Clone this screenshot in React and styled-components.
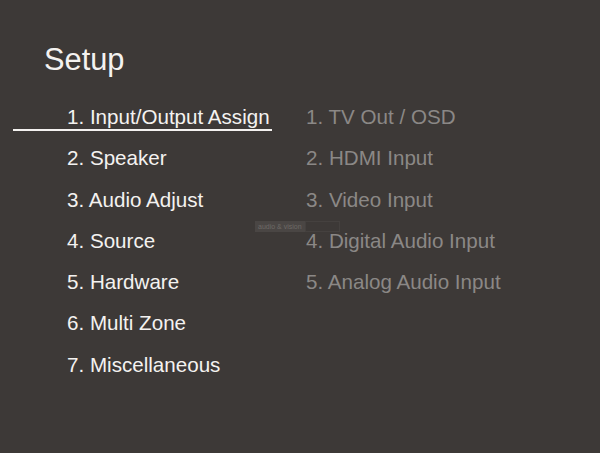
import React from "react";
import styled, { createGlobalStyle } from "styled-components";

const Global = createGlobalStyle`
  html, body {
    margin: 0;
    padding: 0;
    background: #3d3937;
  }
`;

const Screen = styled.div`
  width: 600px;
  height: 453px;
  background: #3d3937;
  font-family: "Liberation Sans", Arial, sans-serif;
  position: relative;
  overflow: hidden;
`;

const Title = styled.h1`
  margin: 0;
  padding: 42px 0 0 44px;
  font-size: 30.8px;
  font-weight: normal;
  line-height: 36px;
  color: #f4f2f0;
`;

const Columns = styled.div`
  display: flex;
  padding-top: 27px;
`;

const List = styled.ul`
  list-style: none;
  margin: 0;
  padding: 0;
  display: flex;
  flex-direction: column;
  gap: 17.3px;
  width: ${(p) => p.$width}px;
  padding-left: ${(p) => p.$left}px;
`;

const Item = styled.li`
  width: fit-content;
  height: 24px;
  line-height: 24px;
  font-size: 20.6px;
  white-space: nowrap;
  color: ${(p) => (p.$dim ? "#8b8886" : "#f4f2f0")};
  padding-left: ${(p) => p.$indent || 0}px;
  padding-right: ${(p) => (p.$selected ? 2 : 0)}px;
  box-shadow: ${(p) => (p.$selected ? "0 2px 0 #f4f2f0" : "none")};
`;

const Watermark = styled.div`
  position: absolute;
  left: 255px;
  top: 221px;
  display: flex;
  height: 11px;
  font-size: 7px;
  line-height: 11px;
  color: #6e6a67;
`;

const MarkText = styled.span`
  background: #4a4644;
  padding: 0 3px;
`;

const MarkBox = styled.span`
  width: 33px;
  border: 1px solid #45413f;
`;

const main = [
  "1. Input/Output Assign",
  "2. Speaker",
  "3. Audio Adjust",
  "4. Source",
  "5. Hardware",
  "6. Multi Zone",
  "7. Miscellaneous",
];

const sub = [
  "1. TV Out / OSD",
  "2. HDMI Input",
  "3. Video Input",
  "4. Digital Audio Input",
  "5. Analog Audio Input",
];

export default function App() {
  return (
    <Screen>
      <Global />
      <Title>Setup</Title>
      <Columns>
        <List $left={13} $width={293}>
          {main.map((t, i) => (
            <Item key={t} $indent={54} $selected={i === 0}>
              {t}
            </Item>
          ))}
        </List>
        <List $left={0} $width={294}>
          {sub.map((t) => (
            <Item key={t} $dim>
              {t}
            </Item>
          ))}
        </List>
      </Columns>
      <Watermark>
        <MarkText>audio &amp; vision</MarkText>
        <MarkBox />
      </Watermark>
    </Screen>
  );
}
